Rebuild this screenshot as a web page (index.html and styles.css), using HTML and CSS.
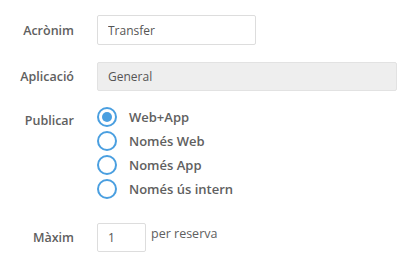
FILE: index.html
```html
<!DOCTYPE html>
<html lang="ca">
<head>
    <meta charset="UTF-8">
    <title>Configuració</title>
    <link rel="stylesheet" href="styles.css">
</head>
<body>
    <form class="form">
        <div class="row row-acronim">
            <label class="label">Acrònim</label>
            <input class="input input-text" type="text" value="Transfer">
        </div>

        <div class="row row-app">
            <label class="label">Aplicació</label>
            <input class="input input-wide" type="text" value="General" disabled>
        </div>

        <div class="row row-publish">
            <label class="label label-top">Publicar</label>
            <div class="radios">
                <label class="radio"><span class="dot checked"></span>Web+App</label>
                <label class="radio"><span class="dot"></span>Només Web</label>
                <label class="radio"><span class="dot"></span>Només App</label>
                <label class="radio"><span class="dot"></span>Només ús intern</label>
            </div>
        </div>

        <div class="row row-max">
            <label class="label">Màxim</label>
            <div class="inline">
                <input class="input input-small" type="text" value="1">
                <span class="suffix">per reserva</span>
            </div>
        </div>
    </form>
</body>
</html>
```

FILE: styles.css
```css
:root {
    --text-color: #606060;
    --input-text: #555555;
    --border-color: #dddddd;
    --disabled-bg: #eeeeee;
    --blue: #4a9fe0;
}

* {
    margin: 0;
    padding: 0;
    box-sizing: border-box;
}

body {
    font-family: 'Open Sans', sans-serif;
    background-color: #ffffff;
    color: var(--text-color);
}

.form {
    padding-top: 15px;
}

.row {
    display: grid;
    grid-template-columns: 74px 1fr;
    column-gap: 23px;
    align-items: center;
}

.label {
    font-size: 12.5px;
    font-weight: 600;
    text-align: right;
    color: var(--text-color);
}

.label-top {
    align-self: start;
    padding-top: 5px;
}

.input {
    display: block;
    font-family: 'Open Sans', sans-serif;
    font-size: 12px;
    color: var(--input-text);
    border: 1px solid var(--border-color);
    border-radius: 2px;
    background-color: #ffffff;
    padding: 0 10px;
    outline: none;
}

.input-text {
    width: 159px;
    height: 30px;
}

.input-wide {
    width: 300px;
    height: 29px;
    background-color: var(--disabled-bg);
    border-color: #e2e2e2;
}

.input-small {
    width: 49px;
    height: 29px;
}

.row-app {
    margin-top: 17px;
}

.row-publish {
    margin-top: 16px;
}

.radios {
    display: flex;
    flex-direction: column;
    gap: 4px;
}

.radio {
    display: flex;
    align-items: center;
    gap: 12px;
    height: 20px;
    font-size: 13px;
    font-weight: 600;
    color: var(--text-color);
}

.dot {
    width: 20px;
    height: 20px;
    border: 2px solid var(--blue);
    border-radius: 50%;
    display: flex;
    align-items: center;
    justify-content: center;
    flex-shrink: 0;
}

.dot.checked::after {
    content: '';
    width: 10px;
    height: 10px;
    border-radius: 50%;
    background-color: var(--blue);
}

.row-max {
    margin-top: 24px;
}

.inline {
    display: flex;
    align-items: flex-start;
    gap: 5px;
}

.suffix {
    font-size: 12.5px;
    line-height: 20px;
    margin-top: 1px;
}
```
